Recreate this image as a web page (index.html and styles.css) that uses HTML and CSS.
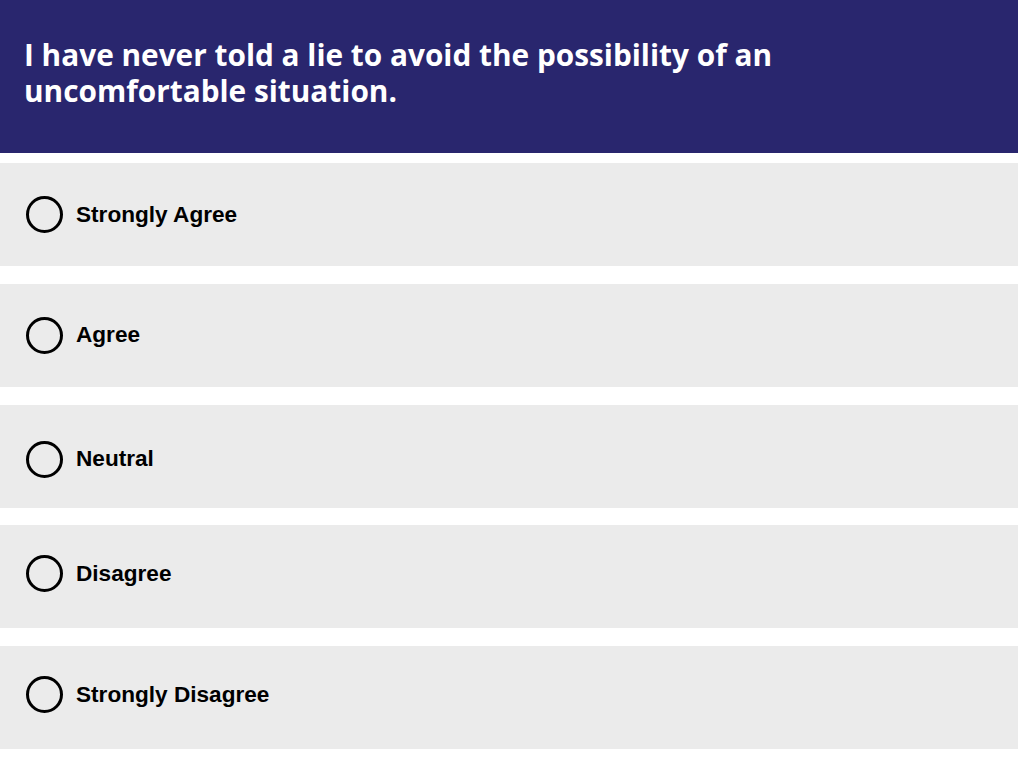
FILE: index.html
```html
<!DOCTYPE html>
<html>
<head>
<meta charset="utf-8">
<link rel="stylesheet" href="styles.css">
</head>
<body>
<div class="page">
  <header class="question">
    <h1 class="question-text">I have never told a lie to avoid the possibility of an uncomfortable situation.</h1>
  </header>
  <ul class="options">
    <li class="option"><span class="radio"></span><span class="label">Strongly Agree</span></li>
    <li class="option"><span class="radio"></span><span class="label">Agree</span></li>
    <li class="option option--low"><span class="radio"></span><span class="label">Neutral</span></li>
    <li class="option option--high"><span class="radio"></span><span class="label">Disagree</span></li>
    <li class="option option--high"><span class="radio"></span><span class="label">Strongly Disagree</span></li>
  </ul>
</div>
</body>
</html>
```
FILE: styles.css
```css
html, body {
  margin: 0;
  padding: 0;
  background: #ffffff;
}
.page {
  width: 1018px;
  display: flex;
  flex-direction: column;
}
.question {
  background: #29266e;
  height: 153px;
  box-sizing: border-box;
  padding: 37px 24px 0 24px;
}
.question-text {
  margin: 0;
  width: 800px;
  color: #ffffff;
  font-family: "Open Sans", sans-serif;
  font-weight: 700;
  font-size: 29.8px;
  line-height: 36px;
  letter-spacing: 0;
}
.options {
  list-style: none;
  margin: 10px 0 0 0;
  padding: 0;
  display: flex;
  flex-direction: column;
  gap: 17.75px;
}
.option {
  background: #ebebeb;
  height: 103px;
  box-sizing: border-box;
  display: flex;
  align-items: center;
  padding-left: 26px;
  gap: 13px;
}
.option--low {
  padding-top: 6px;
}
.option--high {
  padding-bottom: 6px;
}
.radio {
  width: 31px;
  height: 31px;
  border: 3px solid #000000;
  border-radius: 50%;
  flex: none;
}
.label {
  font-family: "Liberation Sans", Arial, sans-serif;
  font-weight: 700;
  font-size: 22.6px;
  color: #000000;
}
```
